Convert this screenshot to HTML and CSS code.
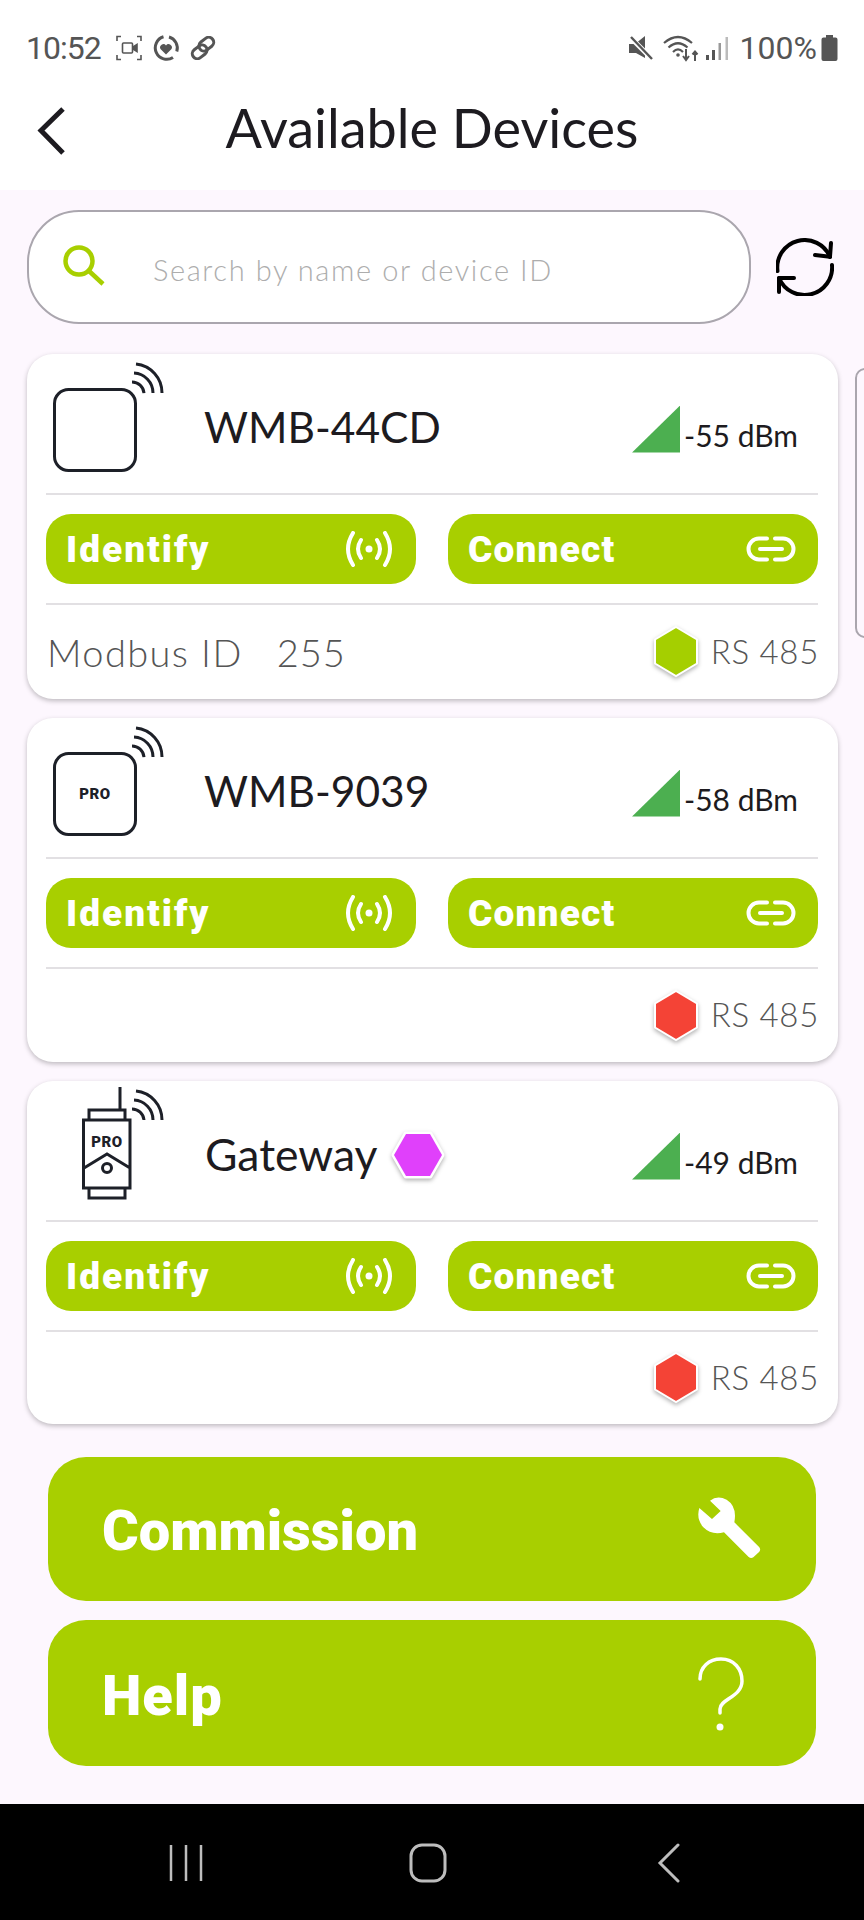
FILE: index.html
```html
<!DOCTYPE html>
<html lang="en">

<head>
    <meta charset="UTF-8">
    <meta name="viewport" content="width=device-width, initial-scale=1.0">
    <title>Available Devices</title>
    <link rel="stylesheet" href="styles.css">
</head>

<body>
    <div class="status-bar">
        <span class="clock">10:52</span>
        <svg class="st-icon" width="26" height="26" viewBox="0 0 26 26" fill="none" stroke="#555" stroke-width="1.6">
            <path d="M1 6V1.5H5M21 1.5H25V6M25 20V24.5H21M5 24.5H1V20" />
            <rect x="6.5" y="8" width="10" height="10" rx="1" />
            <path d="M17 12l4-2.5v7L17 14" fill="#555" />
        </svg>
        <svg class="st-icon" width="28" height="28" viewBox="0 0 28 28" fill="none" stroke="#555" stroke-width="3">
            <path d="M11.500 2.800A11.500 11.500 0 1 0 21 23.500" />
            <path d="M17 3A11.500 11.500 0 0 1 24.800 17.500" />
            <path d="M14 20.500l-5.500-5.500a3.300 3.300 0 0 1 5.500-3.600 3.300 3.300 0 0 1 5.500 3.600z" fill="#555" stroke="none" />
        </svg>
        <svg class="st-icon" width="26" height="24" viewBox="0 0 26 24" fill="none" stroke="#555" stroke-width="3">
            <rect x="0" y="8" width="16" height="10" rx="5" transform="rotate(-38 13 12)" />
            <rect x="10" y="6" width="16" height="10" rx="5" transform="rotate(-38 13 12)" />
        </svg>
        <span class="st-right">
            <svg width="26" height="26" viewBox="0 0 26 26">
                <path d="M1 9h6l10-8v22l-9-5H1z" fill="#555" />
                <path d="M3 3l21 21" stroke="#fff" stroke-width="5" />
                <path d="M3 2l21 22" stroke="#555" stroke-width="2.400" />
            </svg>
            <svg class="st-wifi" width="36" height="28" viewBox="0 0 36 28" fill="none" stroke="#555" stroke-width="2.200">
                <path d="M1 9Q15 -3 29 9M5.500 13.500Q15 5 24.500 13.500M10 18Q15 13 20 18" />
                <circle cx="15" cy="21" r="1.800" fill="#555" stroke="none" />
                <path d="M23 15v10M20 22l3 4 3-4M32 27v-9M29.500 20.500l2.500-3 2.500 3" stroke-width="2" />
            </svg>
            <svg class="st-bars" width="23" height="26" viewBox="0 0 23 26">
                <rect x="0" y="20" width="3" height="5" fill="#555" />
                <rect x="6" y="15" width="3" height="10" fill="#555" />
                <rect x="12.500" y="8" width="2.500" height="17" fill="#999" />
                <rect x="19.500" y="2" width="2.500" height="23" fill="#bbb" />
            </svg>
            <span class="battery-text">100%</span>
            <svg width="17" height="26" viewBox="0 0 17 26">
                <path d="M5 0h7v2.500h2.500a2 2 0 0 1 2 2V24a2 2 0 0 1-2 2h-12a2 2 0 0 1-2-2V4.500a2 2 0 0 1 2-2H5z" fill="#555" />
            </svg>
        </span>
    </div>

    <div class="top-bar">
        <svg class="back" width="30" height="48" viewBox="0 0 30 48" fill="none" stroke="#1d1b20" stroke-width="5">
            <path d="M26 2L4 23.500 26 46" />
        </svg>
        <h1>Available Devices</h1>
    </div>

    <div class="content">
        <div class="search-row">
            <div class="search">
                <svg width="44" height="44" viewBox="0 0 44 44" fill="none" stroke="#a8cf00" stroke-width="4.500">
                    <circle cx="16" cy="16" r="13.500" />
                    <path d="M26 26l14 13" />
                </svg>
                <span class="placeholder">Search by name or device ID</span>
            </div>
            <svg class="refresh" width="58" height="58" viewBox="0 0 58 58" fill="none" stroke="#000" stroke-width="4" stroke-linecap="round" stroke-linejoin="round">
                <path d="M1.500 33A27.400 27.400 0 0 1 54 19" />
                <path d="M39 17L54 18.700 55 5" />
                <path d="M56 27A27.600 27.600 0 0 1 3 40" />
                <path d="M18 40L3 40 3 54" />
            </svg>
        </div>

        <div class="peek"></div>

        <div class="card card-first">
            <div class="card-head">
                <svg class="device" width="100" height="140" viewBox="0 0 100 140" fill="none" stroke="#1d2028" stroke-width="3">
                    <rect x="8.500" y="35.500" width="81" height="81" rx="14" />
                    <path d="M91 10A29 29 0 0 1 117 39M89 19A20 20 0 0 1 108 39M87 28A12 12 0 0 1 99 39" transform="translate(-1 0)" />
                </svg>
                <span class="name">WMB-44CD</span>
                <div class="signal">
                    <span class="tri"></span>
                    <span class="dbm">-55 dBm</span>
                </div>
            </div>
            <div class="actions">
                <div class="btn btn-identify">Identify
                    <svg width="50" height="36" viewBox="0 0 50 36" fill="none" stroke="#fff" stroke-width="4" stroke-linecap="round">
                        <path d="M9 2Q-1 18 9 34M41 2Q51 18 41 34M17 9Q11 18 17 27M33 9Q39 18 33 27" />
                        <circle cx="25" cy="18" r="3.500" fill="#fff" stroke="none" />
                    </svg>
                </div>
                <div class="btn">Connect
                    <svg width="50" height="26" viewBox="0 0 50 26" fill="none" stroke="#fff" stroke-width="4" stroke-linecap="round">
                        <path d="M21 2.500H13a10.500 10.500 0 0 0 0 21h8M29 2.500h8a10.500 10.500 0 0 1 0 21h-8M14 13h22" />
                    </svg>
                </div>
            </div>
            <div class="card-foot">
                <span class="modbus">Modbus ID<span class="modbus-id">255</span></span>
                <div class="bus">
                    <svg class="hex" width="46" height="54" viewBox="0 0 46 54">
                        <path d="M23 2L44 14.500V38.500L23 51 2 38.500V14.500z" fill="#a5cf00" stroke="#fff" stroke-width="2" />
                    </svg>
                    <span>RS 485</span>
                </div>
            </div>
        </div>

        <div class="card">
            <div class="card-head">
                <svg class="device" width="100" height="140" viewBox="0 0 100 140" fill="none" stroke="#1d2028" stroke-width="3">
                    <rect x="8.500" y="35.500" width="81" height="81" rx="14" />
                    <path d="M91 10A29 29 0 0 1 117 39M89 19A20 20 0 0 1 108 39M87 28A12 12 0 0 1 99 39" transform="translate(-1 0)" />
                    <text class="pro" x="49" y="81">PRO</text>
                </svg>
                <span class="name">WMB-9039</span>
                <div class="signal">
                    <span class="tri"></span>
                    <span class="dbm">-58 dBm</span>
                </div>
            </div>
            <div class="actions">
                <div class="btn btn-identify">Identify
                    <svg width="50" height="36" viewBox="0 0 50 36" fill="none" stroke="#fff" stroke-width="4" stroke-linecap="round">
                        <path d="M9 2Q-1 18 9 34M41 2Q51 18 41 34M17 9Q11 18 17 27M33 9Q39 18 33 27" />
                        <circle cx="25" cy="18" r="3.500" fill="#fff" stroke="none" />
                    </svg>
                </div>
                <div class="btn">Connect
                    <svg width="50" height="26" viewBox="0 0 50 26" fill="none" stroke="#fff" stroke-width="4" stroke-linecap="round">
                        <path d="M21 2.500H13a10.500 10.500 0 0 0 0 21h8M29 2.500h8a10.500 10.500 0 0 1 0 21h-8M14 13h22" />
                    </svg>
                </div>
            </div>
            <div class="card-foot">
                <span></span>
                <div class="bus">
                    <svg class="hex" width="46" height="54" viewBox="0 0 46 54">
                        <path d="M23 2L44 14.500V38.500L23 51 2 38.500V14.500z" fill="#f44336" stroke="#fff" stroke-width="2" />
                    </svg>
                    <span>RS 485</span>
                </div>
            </div>
        </div>

        <div class="card card-last">
            <div class="card-head">
                <svg class="device" width="100" height="140" viewBox="0 0 100 140" fill="none" stroke="#1d2028" stroke-width="3">
                    <path d="M74 6V29M43 39V29H79V39M37.500 39H84V107H37.500zM43 107V117H79V107M38 87L61 73 84 87" />
                    <circle cx="61" cy="87" r="4.500" />
                    <path d="M91 10A29 29 0 0 1 117 39M89 19A20 20 0 0 1 108 39M87 28A12 12 0 0 1 99 39" transform="translate(-1 0)" />
                    <text class="pro" x="61" y="66">PRO</text>
                </svg>
                <span class="name name-gw">Gateway</span>
                <svg class="hex hex-gw" width="54" height="50" viewBox="0 0 54 50">
                    <path d="M15 3H39L51 24 39 45H15L3 24z" fill="#e040fb" stroke="#fff" stroke-width="5" paint-order="stroke" stroke-linejoin="round" />
                </svg>
                <div class="signal">
                    <span class="tri"></span>
                    <span class="dbm">-49 dBm</span>
                </div>
            </div>
            <div class="actions">
                <div class="btn btn-identify">Identify
                    <svg width="50" height="36" viewBox="0 0 50 36" fill="none" stroke="#fff" stroke-width="4" stroke-linecap="round">
                        <path d="M9 2Q-1 18 9 34M41 2Q51 18 41 34M17 9Q11 18 17 27M33 9Q39 18 33 27" />
                        <circle cx="25" cy="18" r="3.500" fill="#fff" stroke="none" />
                    </svg>
                </div>
                <div class="btn">Connect
                    <svg width="50" height="26" viewBox="0 0 50 26" fill="none" stroke="#fff" stroke-width="4" stroke-linecap="round">
                        <path d="M21 2.500H13a10.500 10.500 0 0 0 0 21h8M29 2.500h8a10.500 10.500 0 0 1 0 21h-8M14 13h22" />
                    </svg>
                </div>
            </div>
            <div class="card-foot">
                <span></span>
                <div class="bus">
                    <svg class="hex" width="46" height="54" viewBox="0 0 46 54">
                        <path d="M23 2L44 14.500V38.500L23 51 2 38.500V14.500z" fill="#f44336" stroke="#fff" stroke-width="2" />
                    </svg>
                    <span>RS 485</span>
                </div>
            </div>
        </div>

        <div class="big-btn"><span class="big-label">Commission</span>
            <svg width="100" height="100" viewBox="0 0 300 300" fill="#fff">
                <path d="M90 65Q112 48 140 62Q172 82 163 130L238 205Q243 212 238 218L220 235Q213 240 206 234L132 160Q95 170 70 145Q48 120 58 87L96 120 122 96z" />
            </svg>
        </div>
        <div class="big-btn big-btn-help"><span class="help-label">Help</span>
            <svg class="help-icon" width="46" height="76" viewBox="0 0 46 76" fill="none" stroke="#fff" stroke-width="3.500" stroke-linecap="round">
                <path d="M2 22C2 10 11 2 23 2C36 2 44 12 44 24C44 40 22 42 22 52V56" />
                <circle cx="22" cy="70" r="3.500" fill="#fff" stroke="none" />
            </svg>
        </div>
    </div>

    <div class="nav-bar">
        <svg width="36" height="38" viewBox="0 0 36 38" fill="none" stroke="#bdbdbd" stroke-width="2.500">
            <path d="M3 1V37M18 1V37M33 1V37" />
        </svg>
        <svg class="nav-home" width="38" height="40" viewBox="0 0 38 40" fill="none" stroke="#bdbdbd" stroke-width="3">
            <rect x="2" y="2" width="34" height="36" rx="11" />
        </svg>
        <svg width="24" height="40" viewBox="0 0 24 40" fill="none" stroke="#bdbdbd" stroke-width="3" stroke-linecap="round">
            <path d="M21 2L3 20 21 38" />
        </svg>
    </div>
</body>

</html>
```

FILE: styles.css
```css
* {
    box-sizing: border-box;
}

body {
    margin: 0;
    width: 864px;
    height: 1920px;
    display: flex;
    flex-direction: column;
    overflow: hidden;
    background: #fdf7fe;
    font-family: Lato, sans-serif;
    color: #1d1b20;
}

svg {
    display: block;
    flex-shrink: 0;
}

.status-bar {
    height: 96px;
    padding: 0 26px;
    display: flex;
    align-items: center;
    background: #fff;
    color: #555;
    font-family: Roboto, sans-serif;
    font-size: 32px;
}

.clock {
    margin-right: 15px;
    letter-spacing: -1px;
}

.st-icon {
    margin-right: 10px;
}

.st-right {
    margin-left: auto;
    display: flex;
    align-items: center;
}

.st-wifi {
    margin-left: 9px;
}

.st-bars {
    margin-left: 7px;
}

.battery-text {
    margin: 0 4px 0 11px;
}

.top-bar {
    height: 94px;
    position: relative;
    display: flex;
    justify-content: center;
    background: #fff;
}

.back {
    position: absolute;
    left: 37px;
    top: 11px;
}

h1 {
    margin: 0;
    font-size: 54px;
    line-height: 64px;
    font-weight: 400;
}

.content {
    flex: 1;
    position: relative;
    padding: 20px 26px 0 27px;
}

.search-row {
    display: flex;
    align-items: center;
    margin-bottom: 30px;
}

.search {
    width: 724px;
    height: 114px;
    padding-left: 34px;
    display: flex;
    align-items: center;
    background: #fff;
    border: 2px solid #aaa6ae;
    border-radius: 52px;
}

.placeholder {
    margin: 4px 0 0 46px;
    font-size: 29px;
    font-weight: 300;
    letter-spacing: 1.6px;
    color: #adadad;
}

.refresh {
    margin-left: 25px;
}

/* edge of the next page */
.peek {
    position: absolute;
    left: 855px;
    top: 178px;
    width: 30px;
    height: 270px;
    border: 2px solid #aaa6ae;
    border-radius: 10px;
}

.card {
    height: 344px;
    margin-bottom: 19px;
    padding: 0 20px 0 19px;
    display: flex;
    flex-direction: column;
    background: #fff;
    border-radius: 26px;
    box-shadow: 0 2px 5px rgba(0, 0, 0, 0.25);
}

.card-first {
    height: 345px;
}

.card-last {
    height: 343px;
    margin-bottom: 33px;
}

.card-head {
    height: 141px;
    display: flex;
    align-items: center;
    border-bottom: 2px solid #e2e0e3;
}

.device {
    overflow: visible;
}

.pro {
    font-family: Roboto, sans-serif;
    font-size: 15px;
    font-weight: 900;
    fill: #1d2028;
    stroke: none;
    text-anchor: middle;
    letter-spacing: 0.5px;
}

.name {
    margin: 6px 0 0 58px;
    font-size: 42.500px;
    font-weight: 400;
}

.name-gw {
    margin: 6px 13px 0 59px;
    font-size: 44.500px;
}

.signal {
    margin-left: auto;
    padding: 0 20px 15px 0;
    display: flex;
    align-items: flex-end;
    height: 88px;
}

.tri {
    width: 48px;
    height: 47px;
    background: #4caf50;
    clip-path: polygon(100% 0, 100% 100%, 0 100%);
}

.dbm {
    margin: 0 0 2px 4px;
    font-size: 30px;
    font-weight: 400;
    line-height: 32px;
    white-space: nowrap;
}

.actions {
    height: 110px;
    padding-top: 19px;
    display: flex;
    justify-content: space-between;
    align-items: flex-start;
    border-bottom: 2px solid #e2e0e3;
}

.btn {
    width: 370px;
    height: 70px;
    padding: 0 22px 0 20px;
    display: flex;
    justify-content: space-between;
    align-items: center;
    background: #a8cf00;
    border-radius: 25px;
    color: #fff;
    font-family: Roboto, sans-serif;
    font-size: 37px;
    font-weight: 900;
    letter-spacing: 1.200px;
}

.btn-identify {
    letter-spacing: 2px;
}

.card-foot {
    flex: 1;
    display: flex;
    justify-content: space-between;
    align-items: center;
    color: #555;
}

.modbus {
    margin-left: 1px;
    font-size: 38px;
    font-weight: 300;
    letter-spacing: 1.400px;
}

.modbus-id {
    margin-left: 34px;
    letter-spacing: 1px;
}

.bus {
    display: flex;
    align-items: center;
    font-size: 33px;
    font-weight: 300;
    letter-spacing: 0.700px;
}

.bus span {
    margin: -3px -1px 0 12px;
}

.hex {
    filter: drop-shadow(0 2px 2px rgba(0, 0, 0, 0.3));
}

.hex-gw {
    margin-top: 10px;
}

.big-btn {
    width: 768px;
    height: 144px;
    margin: 0 0 19px 21px;
    padding: 0 36px 0 54px;
    display: flex;
    justify-content: space-between;
    align-items: center;
    background: #a8cf00;
    border-radius: 38px;
    color: #fff;
    font-family: Roboto, sans-serif;
    font-size: 56px;
    font-weight: 900;
}

.big-label {
    margin-top: 4px;
}

.big-btn-help {
    height: 146px;
    margin-bottom: 0;
    padding-right: 72px;
}

.help-label {
    margin-top: 6px;
    letter-spacing: 1px;
}

.help-icon {
    margin-top: 4px;
}

.nav-bar {
    height: 116px;
    padding: 2px 183px 0 168px;
    display: flex;
    justify-content: space-between;
    align-items: center;
    background: #000;
}

.nav-home {
    margin-right: 5px;
}
```
